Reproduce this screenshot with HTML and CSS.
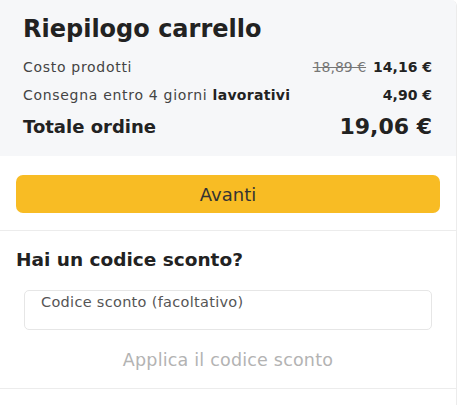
FILE: index.html
```html
<!DOCTYPE html>
<html lang="it">
<head>
<meta charset="utf-8">
<link rel="stylesheet" href="styles.css">
</head>
<body>
<div class="card">
  <section class="summary">
    <h1 class="title">Riepilogo carrello</h1>
    <div class="row">
      <span class="label">Costo prodotti</span>
      <span class="prices"><s class="old">18,89 €</s><b class="price">14,16 €</b></span>
    </div>
    <div class="row">
      <span class="label">Consegna entro 4 giorni <b>lavorativi</b></span>
      <b class="price">4,90 €</b>
    </div>
    <div class="row total">
      <span class="total-label">Totale ordine</span>
      <span class="total-price">19,06 €</span>
    </div>
  </section>
  <section class="actions">
    <button class="btn-next">Avanti</button>
  </section>
  <section class="coupon">
    <h2 class="coupon-title">Hai un codice sconto?</h2>
    <div class="input-wrap">
      <input class="coupon-input" type="text" placeholder="Codice sconto (facoltativo)">
    </div>
    <div class="apply">Applica il codice sconto</div>
  </section>
</div>
</body>
</html>
```

FILE: styles.css
```css
* { box-sizing: border-box; }
html, body { margin: 0; padding: 0; background: #fff; }
body { font-family: "DejaVu Sans", "Open Sans", sans-serif; color: #222; }

.card {
  width: 457px;
  min-height: 405px;
  border-right: 1px solid #ececec;
  border-top-right-radius: 6px;
  overflow: hidden;
}

.summary {
  background: #f6f7f9;
  padding: 13px 24px 0 23px;
  height: 156px;
}
.title {
  margin: 0 0 8px;
  font-size: 24px;
  line-height: 32px;
  font-weight: 700;
  color: #222;
}
.row {
  display: flex;
  justify-content: space-between;
  align-items: center;
  height: 28px;
  font-size: 14px;
  color: #444;
}
.label { letter-spacing: 0.7px; }
.label b { color: #222; font-weight: 700; letter-spacing: 0.3px; }
.prices { display: flex; align-items: center; gap: 7px; }
.old { color: #777; text-decoration: line-through; }
.price { color: #222; font-weight: 700; }
.row.total { height: 34px; }
.total-label { font-size: 18px; font-weight: 700; color: #222; }
.total-price { font-size: 22px; font-weight: 700; color: #222; }

.actions {
  padding: 19px 16px 17px 16px;
  border-bottom: 1px solid #ececec;
}
.btn-next {
  display: block;
  width: 424px;
  height: 38px;
  border: 0;
  border-radius: 7px;
  background: #f8bc24;
  color: #333;
  font-family: inherit;
  font-size: 18px;
  font-weight: 400;
}

.coupon {
  padding: 18px 0 0;
  height: 158px;
  border-bottom: 1px solid #ececec;
}
.coupon-title {
  margin: 0 0 19px 16px;
  font-size: 18.5px;
  line-height: 22px;
  font-weight: 700;
  color: #222;
}
.input-wrap { padding: 0 24px; }
.coupon-input {
  display: block;
  width: 408px;
  height: 40px;
  border: 1px solid #e6e6e6;
  border-radius: 5px;
  padding: 0 16px 16px;
  font-family: inherit;
  font-size: 14.5px;
  letter-spacing: 0.3px;
  background: #fff;
}
.coupon-input::placeholder { color: #555; }
.apply {
  margin-top: 20px;
  text-align: center;
  font-size: 17.5px;
  letter-spacing: 0.2px;
  color: #b3b3b3;
}
```
